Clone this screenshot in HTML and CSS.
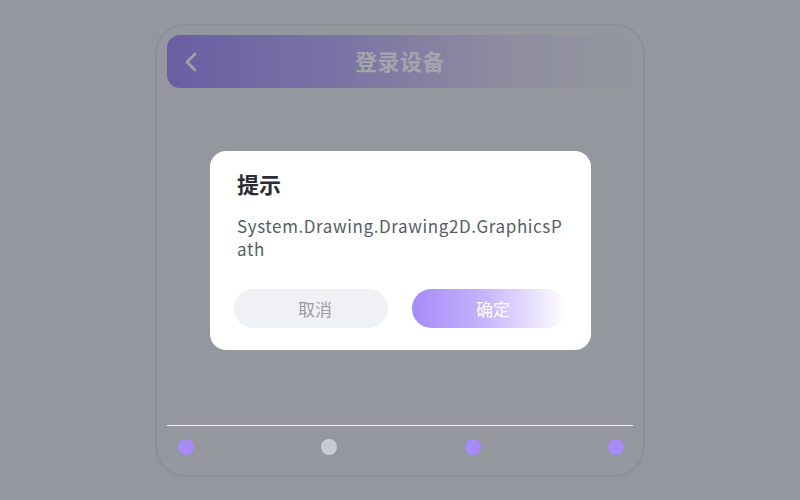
FILE: index.html
```html
<!DOCTYPE html>
<html lang="zh">
<head>
<meta charset="utf-8">
<link rel="stylesheet" href="styles.css">
</head>
<body>
<div class="page">
  <div class="phone">
    <div class="header">
      <svg class="back" width="14" height="22" viewBox="0 0 14 22"><path d="M11 3 L3 11 L11 19" fill="none" stroke="currentColor" stroke-width="2.6" stroke-linecap="round" stroke-linejoin="round"/></svg>
      <div class="title">登录设备</div>
    </div>
    <div class="body"></div>
    <div class="footer">
      <div class="divider"></div>
      <div class="dots">
        <span class="dot on"></span>
        <span class="dot off"></span>
        <span class="dot on"></span>
        <span class="dot on"></span>
      </div>
    </div>
  </div>
  <div class="dialog">
    <div class="dlg-title">提示</div>
    <div class="dlg-text">System.Drawing.Drawing2D.GraphicsPath</div>
    <div class="dlg-actions">
      <div class="btn cancel">取消</div>
      <div class="btn ok">确定</div>
    </div>
  </div>
</div>
</body>
</html>
```
FILE: styles.css
```css
html, body {
  margin: 0;
  padding: 0;
  width: 800px;
  height: 500px;
  overflow: hidden;
  background: #94979e;
  font-family: "Noto Sans CJK SC", "Noto Sans", sans-serif;
}
.page {
  position: relative;
  width: 800px;
  height: 500px;
  display: flex;
  justify-content: center;
  padding-top: 24px;
  box-sizing: border-box;
}
.phone {
  width: 490px;
  height: 453px;
  box-sizing: border-box;
  border: 2px solid #8c8f96;
  border-radius: 30px;
  padding: 9px 10px 0 10px;
  display: flex;
  flex-direction: column;
}
.header {
  height: 53px;
  border-radius: 13px;
  background: linear-gradient(90deg, #6a5ea3 0%, #7a72a5 35%, #8e8e9f 75%, #94979e 100%);
  display: flex;
  align-items: center;
  position: relative;
}
.back {
  color: #a2a4ac;
  margin-left: 17px;
}
.title {
  position: absolute;
  left: 0;
  right: 0;
  text-align: center;
  font-size: 22px;
  font-weight: 700;
  color: #a3a5ac;
  letter-spacing: 0.5px;
  line-height: 53px;
  top: -1px;
}
.body { flex: 1; }
.footer {
  height: 50px;
}
.divider {
  height: 1px;
  background: #f4f4f6;
}
.dots {
  display: flex;
  justify-content: space-between;
  padding: 13px 9px 0 11px;
}
.dot {
  width: 16px;
  height: 16px;
  border-radius: 50%;
}
.dot.on { background: #a78bfa; }
.dot.off { background: #c8cbd2; }

.dialog {
  position: absolute;
  left: 210px;
  top: 151px;
  width: 381px;
  height: 199px;
  box-sizing: border-box;
  background: #fff;
  border-radius: 16px;
  padding: 17px 25px 0 27px;
}
.dlg-title {
  font-size: 22px;
  font-weight: 700;
  color: #2b2d33;
  line-height: 30px;
}
.dlg-text {
  margin-top: 16px;
  font-size: 17px;
  color: #585c66;
  line-height: 23px;
  letter-spacing: 0.6px;
  word-break: break-all;
  width: 331px;
}
.dlg-actions {
  display: flex;
  justify-content: space-between;
  margin-top: 29px;
  width: 332px;
  margin-left: -3px;
}
.btn {
  width: 154px;
  height: 39px;
  box-sizing: border-box;
  padding-left: 8px;
  border-radius: 20px;
  display: flex;
  align-items: center;
  justify-content: center;
  font-size: 17px;
}
.cancel {
  background: #f0f1f4;
  color: #9a9ca3;
}
.ok {
  background: linear-gradient(90deg, #a78bfa 0%, #c3b2fb 45%, #ffffff 100%);
  color: #ffffff;
}
```
